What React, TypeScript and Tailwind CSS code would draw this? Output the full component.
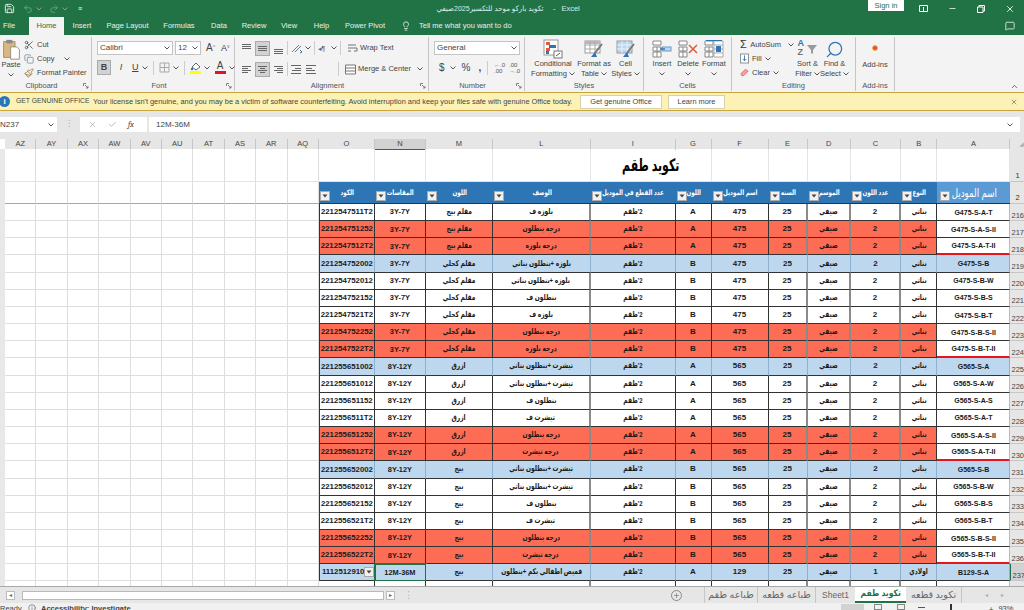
import { Scissors, Copy, Paintbrush, X, Check, Search, Lightbulb, Minus, Plus, Save, Undo2, Redo2, MessageSquare, ChevronUp, Info } from "lucide-react";
import type { ReactNode } from "react";

const SHEET_COLS =
  "grid grid-cols-[5px_repeat(10,31.4px)_56px_51px_67px_98px_84.6px_36px_57px_39px_43.4px_50px_36.6px_73px_13.4px]";

const LEFT_COLS = ["AZ", "AY", "AX", "AW", "AV", "AU", "AT", "AS", "AR", "AQ"];
const TABLE_COLS = ["O", "N", "M", "L", "I", "G", "F", "E", "D", "C", "B", "A"];

const HEADERS = [
  "الكود",
  "المقاسات",
  "اللون",
  "الوصف",
  "عدد القطع في الموديل",
  "اللون",
  "اسم الموديل",
  "السنه",
  "الموسم",
  "عدد اللون",
  "النوع",
];

const V_BORDERS = [
  "border-r border-r-[#333]",
  "border-r border-r-[#333]",
  "border-r border-r-[#333]",
  "border-r-2 border-r-[#8a8a8a]",
  "border-r border-r-[#333]",
  "border-r border-r-[#333]",
  "border-r border-r-[#333]",
  "border-r-2 border-r-[#8a8a8a]",
  "border-r-2 border-r-[#8a8a8a]",
  "border-r-2 border-r-[#8a8a8a]",
  "border-r border-r-[#333]",
  "border-r border-r-[#bbb]",
];

const CELL_SIZES = [
  "text-[7.8px]",
  "text-[7.4px]",
  "text-[8px]",
  "text-[8px]",
  "text-[8px]",
  "text-[8px]",
  "text-[8px]",
  "text-[8px]",
  "text-[8px]",
  "text-[8px]",
  "text-[8px]",
  "text-[7px]",
];

const TABS: [string, string][] = [
  ["Insert", "w-[36px]"],
  ["Page Layout", "w-[55px]"],
  ["Formulas", "w-[48px]"],
  ["Data", "w-[32px]"],
  ["Review", "w-[38px]"],
  ["View", "w-[32px]"],
  ["Help", "w-[33px]"],
  ["Power Pivot", "w-[54px]"],
];

type Kind = "w" | "r" | "b";
type Row = [number, Kind, string, string, string, string, string, string, string, string, string];

const NAVY = "مقلم كحلي";
const BEIGE = "مقلم بيج";
const BLUE = "ازرق";
const PLAIN = "بيج";
const SET = "بلوزه +بنطلون بناتي";
const TSET = "تيشرت +بنطلون بناتي";
const PANTS = "بنطلون ف";
const TOP = "بلوزه ف";
const TEE = "تيشرت ف";
const G_P = "درجه بنطلون";
const G_B = "درجه بلوزه";
const G_T = "درجه تيشرت";

const ROWS: Row[] = [
  [216, "w", "2212547511T2", "3Y-7Y", BEIGE, TOP, "A", "475", "2", "بناتي", "G475-S-A-T"],
  [217, "r", "221254751252", "3Y-7Y", BEIGE, G_P, "A", "475", "2", "بناتي", "G475-S-A-S-II"],
  [218, "r", "2212547512T2", "3Y-7Y", BEIGE, G_B, "A", "475", "2", "بناتي", "G475-S-A-T-II"],
  [219, "b", "221254752002", "3Y-7Y", NAVY, SET, "B", "475", "2", "بناتي", "G475-S-B"],
  [220, "w", "221254752012", "3Y-7Y", NAVY, SET, "B", "475", "2", "بناتي", "G475-S-B-W"],
  [221, "w", "221254752152", "3Y-7Y", NAVY, PANTS, "B", "475", "2", "بناتي", "G475-S-B-S"],
  [222, "w", "2212547521T2", "3Y-7Y", NAVY, TOP, "B", "475", "2", "بناتي", "G475-S-B-T"],
  [223, "r", "221254752252", "3Y-7Y", NAVY, G_P, "B", "475", "2", "بناتي", "G475-S-B-S-II"],
  [224, "r", "2212547522T2", "3Y-7Y", NAVY, G_B, "B", "475", "2", "بناتي", "G475-S-B-T-II"],
  [225, "b", "221255651002", "8Y-12Y", BLUE, TSET, "A", "565", "2", "بناتي", "G565-S-A"],
  [226, "w", "221255651012", "8Y-12Y", BLUE, TSET, "A", "565", "2", "بناتي", "G565-S-A-W"],
  [227, "w", "221255651152", "8Y-12Y", BLUE, PANTS, "A", "565", "2", "بناتي", "G565-S-A-S"],
  [228, "w", "2212556511T2", "8Y-12Y", BLUE, TEE, "A", "565", "2", "بناتي", "G565-S-A-T"],
  [229, "r", "221255651252", "8Y-12Y", BLUE, G_P, "A", "565", "2", "بناتي", "G565-S-A-S-II"],
  [230, "r", "2212556512T2", "8Y-12Y", BLUE, G_T, "A", "565", "2", "بناتي", "G565-S-A-T-II"],
  [231, "b", "221255652002", "8Y-12Y", PLAIN, TSET, "B", "565", "2", "بناتي", "G565-S-B"],
  [232, "w", "221255652012", "8Y-12Y", PLAIN, TSET, "B", "565", "2", "بناتي", "G565-S-B-W"],
  [233, "w", "221255652152", "8Y-12Y", PLAIN, PANTS, "B", "565", "2", "بناتي", "G565-S-B-S"],
  [234, "w", "2212556521T2", "8Y-12Y", PLAIN, TEE, "B", "565", "2", "بناتي", "G565-S-B-T"],
  [235, "r", "221255652252", "8Y-12Y", PLAIN, G_P, "B", "565", "2", "بناتي", "G565-S-B-S-II"],
  [236, "r", "2212556522T2", "8Y-12Y", PLAIN, G_T, "B", "565", "2", "بناتي", "G565-S-B-T-II"],
  [237, "b", "1112512910", "12M-36M", PLAIN, "قميص اطفالي بكم +بنطلون", "A", "129", "1", "اولادي", "B129-S-A"],
];

function Chev({ light }: { light?: boolean }) {
  return (
    <svg width="6" height="4" viewBox="0 0 6 4" className="shrink-0">
      <path d="M0.5 0.5 L3 3 L5.5 0.5" fill="none" stroke={light ? "#999" : "#555"} strokeWidth="1" />
    </svg>
  );
}

function Launcher() {
  return (
    <svg width="6" height="6" viewBox="0 0 6 6" className="shrink-0">
      <path d="M0.5 3 V0.5 H3 M2 2 L5 5 M5 3 V5 H3" fill="none" stroke="#666" strokeWidth="0.8" />
    </svg>
  );
}

function Lines({ rows }: { rows: [number, number, number][] }) {
  return (
    <svg width="11" height="11" viewBox="0 0 11 11" className="shrink-0">
      {rows.map(([x1, x2, y]) => (
        <path key={y} d={`M${x1} ${y + 0.5} H${x2}`} stroke="#666" strokeWidth="1" />
      ))}
    </svg>
  );
}

function Arabic({ children, squeeze = "scale-x-[0.74]" }: { children: string; squeeze?: string }) {
  return (
    <span dir="rtl" className={`inline-block shrink-0 whitespace-nowrap ${squeeze}`}>
      {children}
    </span>
  );
}

function Group({ label, width, launcher, children }: { label: string; width: string; launcher?: boolean; children: ReactNode }) {
  return (
    <div className={`flex h-full shrink-0 flex-col border-r border-r-[#c6c6c6] ${width}`}>
      <div className="flex min-h-0 flex-1">{children}</div>
      <div className="flex h-[12px] items-center justify-center pt-[2px] text-[7.5px] leading-none text-[#555]">
        <span className="flex-1 text-center">{label}</span>
        {launcher && (
          <span className="pr-[2px]">
            <Launcher />
          </span>
        )}
      </div>
    </div>
  );
}

function BigButton({
  icon,
  lines,
  width,
  chevBelow,
  plain,
}: {
  icon: ReactNode;
  lines: string[];
  width: string;
  chevBelow?: boolean;
  plain?: boolean;
}) {
  return (
    <div className={`flex shrink-0 flex-col items-center pt-[2px] text-[7.5px] leading-[10px] text-[#444] ${width}`}>
      <div className="flex h-[21px] items-center justify-center">{icon}</div>
      {lines.map((line, i) => (
        <div key={line} className="flex items-center gap-[2px] whitespace-nowrap">
          {line}
          {i === lines.length - 1 && !chevBelow && !plain && <Chev />}
        </div>
      ))}
      {chevBelow && (
        <div className="flex h-[10px] items-center">
          <Chev />
        </div>
      )}
    </div>
  );
}

function PasteIcon() {
  return (
    <svg width="19" height="21" viewBox="0 0 20 24">
      <rect x="1" y="3" width="13" height="18" fill="#d9b77e" stroke="#a98a55" />
      <rect x="4" y="1" width="7" height="4" fill="#8a8a8a" />
      <path d="M9 9 H16 L19 12 V23 H9 Z" fill="#fff" stroke="#888" />
    </svg>
  );
}

function CondIcon() {
  return (
    <svg width="20" height="20" viewBox="0 0 20 20">
      <rect x="1" y="1" width="14" height="15" fill="#fff" stroke="#999" />
      <rect x="3" y="3" width="4" height="3" fill="#e05a3a" />
      <rect x="6" y="6" width="7" height="3" fill="#2e75b6" />
      <rect x="3" y="9" width="4" height="3" fill="#e05a3a" />
      <rect x="3" y="12" width="3" height="3" fill="#2e75b6" />
      <rect x="11" y="12" width="8" height="7" fill="#fff" stroke="#777" />
      <path d="M13 17 L17 14" stroke="#555" />
    </svg>
  );
}

function TableIcon({ filled }: { filled?: boolean }) {
  return (
    <svg width="20" height="20" viewBox="0 0 20 20">
      <rect x="1" y="2" width="15" height="12" fill={filled ? "#bcd6ee" : "#fff"} stroke="#999" />
      {!filled && <rect x="1" y="2" width="15" height="3" fill="#b8b8b8" />}
      <path d="M1 6 H16 M1 10 H16 M6 2 V14 M11 2 V14" stroke={filled ? "#e8f1fa" : "#aaa"} />
      <path d="M18 5 L11 14" stroke="#777" strokeWidth="2" />
      <path d="M11 13 L7 18 H13 Z" fill="#2e75b6" />
    </svg>
  );
}

function CellsIcon({ kind }: { kind: "insert" | "delete" | "format" }) {
  return (
    <svg width="20" height="18" viewBox="0 0 20 18">
      <path d="M1 1 H9 V5 H1 Z M1 7 H9 V11 H1 Z M1 12 H9 V17 H1 Z M5 7 V17" fill="#fff" stroke="#888" />
      {kind === "insert" && (
        <>
          <rect x="10" y="7" width="9" height="4" fill="#bcd6ee" stroke="#6a9bc9" />
          <path d="M8 9 H13" stroke="#2e75b6" strokeWidth="1.5" />
        </>
      )}
      {kind === "delete" && <path d="M11 5 L19 13 M19 5 L11 13" stroke="#e05a3a" strokeWidth="1.5" />}
      {kind === "format" && (
        <>
          <path d="M10 1 H19 V17 H10 Z M10 5 H19 M10 9 H19 M10 13 H19" fill="#fff" stroke="#aaa" />
          <rect x="12" y="6" width="5" height="6" fill="#2e75b6" />
          <path d="M2 0.5 H18" stroke="#2e75b6" />
        </>
      )}
    </svg>
  );
}

function FilterButton() {
  return (
    <span className="flex h-[10px] w-[10px] shrink-0 items-center justify-center border border-[#aaa] bg-[#f1f1f1]">
      <svg width="6" height="4" viewBox="0 0 6 4">
        <path d="M0.5 0.5 H5.5 L3 3.5 Z" fill="#444" />
      </svg>
    </span>
  );
}

function Blanks({ line }: { line: string }) {
  return (
    <>
      <div className="bg-[#e8e8e8]" />
      {LEFT_COLS.map((c) => (
        <div key={c} className={`border-r border-r-[#dedede] ${line}`} />
      ))}
    </>
  );
}

function DataRow({ row }: { row: Row }) {
  const [num, kind, code, size, color, desc, letter, model, count, gender, name] = row;
  const bg = kind === "r" ? "bg-[#fd6d55]" : kind === "b" ? "bg-[#bdd7ee]" : "bg-white";
  const cells: string[] = [code, size, color, desc, "2'طقم", letter, model, "25", "صيفي", count, gender, name];
  const endsGroup = name.endsWith("T-II");
  const selected = num === 237;

  return (
    <div className={`${SHEET_COLS} h-[17.17px]`}>
      <Blanks line="border-b border-b-[#dedede]" />
      {cells.map((text, i) => {
        const isName = i === 11;
        const cellBg = isName && kind === "r" ? "bg-white" : bg;
        const bottom = isName && endsGroup ? "border-b-2 border-b-[#e8141c]" : "border-b border-b-[#333]";
        const side = kind === "b" ? "border-r border-r-[#8fb0cc]" : V_BORDERS[i];
        const focus = selected && i === 1 ? "outline-2 -outline-offset-1 outline-[#217346]" : "";
        return (
          <div
            key={i}
            className={`flex items-center overflow-hidden whitespace-nowrap font-bold leading-none text-[#1a1a1a] ${CELL_SIZES[i]} ${cellBg} ${bottom} ${side} ${focus} ${
              i === 0 ? "border-l border-l-[#333]" : ""
            } ${selected && i === 0 ? "justify-between pl-[2px]" : "justify-center"}`}
          >
            {/[\u0600-\u06ff]/.test(text) ? <Arabic>{text}</Arabic> : <span>{text}</span>}
            {selected && i === 0 && <FilterButton />}
          </div>
        );
      })}
      <div
        className={`flex items-end overflow-hidden border-b border-b-[#c6c6c6] pb-px text-[7.5px] leading-none text-[#444] ${
          selected ? "border-l border-l-[#217346] bg-[#d2d2d2] pl-px" : "bg-[#e6e6e6] pl-[1px]"
        }`}
      >
        {num}
      </div>
    </div>
  );
}

function Ribbon() {
  return (
    <div className="flex h-[57px] shrink-0 bg-[#f3f3f3] pb-px pt-[2px]">
      <Group label="Clipboard" width="w-[92px]" launcher>
        <div className="flex w-[22px] shrink-0 flex-col items-center pt-[2px] text-[7.5px] leading-[10px] text-[#444]">
          <PasteIcon />
          <span>Paste</span>
          <span className="mt-[3px]">
            <Chev />
          </span>
        </div>
        <div className="flex flex-col gap-[3px] pl-[2px] pt-[2px] text-[7.5px] leading-[11px] text-[#444]">
          <div className="flex items-center gap-[3px]">
            <Scissors size={10} className="text-[#555]" />
            Cut
          </div>
          <div className="flex items-center gap-[3px]">
            <Copy size={10} className="text-[#7a93ad]" />
            Copy <span className="ml-[6px]"><Chev /></span>
          </div>
          <div className="flex items-center gap-[3px] whitespace-nowrap">
            <Paintbrush size={10} className="text-[#9a7b3c]" />
            Format Painter
          </div>
        </div>
      </Group>

      <Group label="Font" width="w-[143px]" launcher>
        <div className="flex flex-col gap-[5px] pl-[5px] pt-[4px] text-[#444]">
          <div className="flex items-center">
            <div className="flex h-[14px] w-[76px] items-center justify-between border border-[#c4c4c4] bg-white px-[2px] text-[8px]">
              Calibri <Chev />
            </div>
            <div className="ml-[2px] flex h-[14px] w-[26px] items-center justify-between border border-[#c4c4c4] bg-white px-[2px] text-[8px]">
              12 <Chev />
            </div>
            <span className="ml-[5px] text-[10px] leading-none">
              A<sup className="text-[5px] text-[#2e75b6]">^</sup>
            </span>
            <span className="ml-[6px] text-[9px] leading-none">
              A<sup className="text-[5px] text-[#2e75b6]">v</sup>
            </span>
          </div>
          <div className="flex items-center text-[9px]">
            <span className="flex h-[15px] w-[14px] items-center justify-center border border-[#aaa] bg-[#d2d2d2] font-bold">B</span>
            <span className="ml-[6px] w-[8px] text-center italic">I</span>
            <span className="ml-[7px] underline">U</span>
            <span className="ml-[3px]"><Chev /></span>
            <span className="mx-[5px] h-[14px] w-px bg-[#ccc]" />
            <svg width="11" height="11" viewBox="0 0 11 11">
              <path d="M1 1 H10 V10 H1 Z M1 5.5 H10 M5.5 1 V10" fill="none" stroke="#aaa" />
            </svg>
            <span className="ml-[3px]"><Chev /></span>
            <span className="mx-[5px] h-[14px] w-px bg-[#ccc]" />
            <span className="flex flex-col items-center">
              <svg width="11" height="9" viewBox="0 0 11 9">
                <path d="M2 5 L6 1 L10 5 L6 8 Z" fill="#fff" stroke="#666" />
                <circle cx="2" cy="7" r="1.2" fill="#2e75b6" />
              </svg>
              <span className="h-[3px] w-[11px] bg-[#ffff00]" />
            </span>
            <span className="ml-[3px]"><Chev /></span>
            <span className="ml-[5px] flex flex-col items-center text-[10px] leading-[10px]">
              A
              <span className="h-[3px] w-[11px] bg-[#e81123]" />
            </span>
            <span className="ml-[3px]"><Chev /></span>
          </div>
        </div>
      </Group>

      <Group label="Alignment" width="w-[194px]" launcher>
        <div className="flex flex-col gap-[5px] pl-[6px] pt-[3px] text-[7.5px] leading-none text-[#444]">
          <div className="flex h-[16px] items-center">
            <Lines rows={[[1, 10, 1], [1, 10, 3], [1, 10, 5]]} />
            <span className="ml-[3px] flex h-[15px] w-[15px] items-center justify-center border border-[#aaa] bg-[#d2d2d2]">
              <Lines rows={[[1, 10, 3], [1, 10, 5], [1, 10, 7]]} />
            </span>
            <span className="ml-[3px]"><Lines rows={[[1, 10, 6], [1, 10, 8], [1, 10, 10]]} /></span>
            <span className="mx-[3px] h-[14px] w-px bg-[#ccc]" />
            <svg width="12" height="11" viewBox="0 0 12 11">
              <path d="M1 9 L8 2 M4 9 L10 3" stroke="#777" />
              <path d="M9 7 L11 9 L9 10" fill="none" stroke="#2e75b6" />
            </svg>
            <span className="ml-[2px]"><Chev /></span>
            <span className="mx-[3px] h-[14px] w-px bg-[#ccc]" />
            <span className="w-[10px] text-[7px] text-[#555]">
              <span className="text-[#2e75b6]">◂</span>¶
            </span>
            <span className="ml-[3px]"><Chev /></span>
            <span className="ml-[3px] mr-[6px] h-[14px] w-px bg-[#ccc]" />
            <svg width="11" height="11" viewBox="0 0 11 11">
              <path d="M1 2 H9 M1 5 H10 V8 H7 M1 8 H4" fill="none" stroke="#777" />
            </svg>
            <span className="ml-[2px] whitespace-nowrap text-[7.5px]">Wrap Text</span>
          </div>
          <div className="flex h-[16px] items-center">
            <Lines rows={[[1, 10, 2], [1, 7, 4], [1, 10, 6], [1, 7, 8]]} />
            <span className="ml-[3px] flex h-[15px] w-[15px] items-center justify-center border border-[#aaa] bg-[#d2d2d2]">
              <Lines rows={[[1, 10, 2], [3, 8, 4], [1, 10, 6], [3, 8, 8]]} />
            </span>
            <span className="ml-[3px]"><Lines rows={[[1, 10, 2], [4, 10, 4], [1, 10, 6], [4, 10, 8]]} /></span>
            <span className="mx-[3px] h-[14px] w-px bg-[#ccc]" />
            <Lines rows={[[0, 10, 1], [4, 10, 4], [1, 10, 6], [0, 10, 9]]} />
            <span className="ml-[4px]"><Lines rows={[[0, 10, 1], [0, 6, 4], [0, 9, 6], [0, 10, 9]]} /></span>
            <span className="ml-[21px] mr-[6px] h-[14px] w-px bg-[#ccc]" />
            <svg width="11" height="11" viewBox="0 0 11 11">
              <path d="M0.5 1 H10.5 V10 H0.5 Z M0.5 4 H10.5 M0.5 7 H10.5" fill="#fff" stroke="#777" />
            </svg>
            <span className="ml-[2px] whitespace-nowrap text-[7.5px]">Merge &amp; Center</span>
            <span className="ml-[6px]"><Chev /></span>
          </div>
        </div>
      </Group>

      <Group label="Number" width="w-[96px]" launcher>
        <div className="flex w-full flex-col gap-[6px] pl-[5px] pr-[4px] pt-[4px] text-[#444]">
          <div className="flex h-[14px] items-center justify-between border border-[#c4c4c4] bg-white px-[2px] text-[8px]">
            General <Chev />
          </div>
          <div className="flex items-center pl-[5px] text-[10px] leading-none">
            $<span className="ml-[5px]"><Chev /></span>
            <span className="ml-[6px]">%</span>
            <span className="ml-[8px] font-bold">,</span>
            <span className="mx-[6px] h-[14px] w-px bg-[#ccc]" />
            <span className="text-[6px] leading-[6px] text-[#555]">
              <span className="text-[#2e75b6]">←</span>.0
              <br />
              .00
            </span>
            <span className="ml-[4px] text-[6px] leading-[6px] text-[#555]">
              .00
              <br />
              <span className="text-[#2e75b6]">→</span>.0
            </span>
          </div>
        </div>
      </Group>

      <Group label="Styles" width="w-[119px]">
        <BigButton icon={<CondIcon />} width="w-[56px]" lines={["Conditional", "Formatting"]} />
        <BigButton icon={<TableIcon />} width="w-[26px]" lines={["Format as", "Table"]} />
        <BigButton icon={<TableIcon filled />} width="w-[37px]" lines={["Cell", "Styles"]} />
      </Group>

      <Group label="Cells" width="w-[88px]">
        <div className="flex pl-[5px]">
          <BigButton icon={<CellsIcon kind="insert" />} width="w-[26px]" lines={["Insert"]} chevBelow />
          <BigButton icon={<CellsIcon kind="delete" />} width="w-[26px]" lines={["Delete"]} chevBelow />
          <BigButton icon={<CellsIcon kind="format" />} width="w-[26px]" lines={["Format"]} chevBelow />
        </div>
      </Group>

      <Group label="Editing" width="w-[124px]">
        <div className="flex w-[62px] shrink-0 flex-col gap-[3px] pl-[8px] pt-[2px] text-[7.5px] leading-[11px] text-[#444]">
          <div className="flex items-center gap-[3px] whitespace-nowrap">
            <span className="w-[9px] text-[11px] leading-none text-[#333]">Σ</span>AutoSum
            <span className="ml-[4px]"><Chev /></span>
          </div>
          <div className="flex items-center gap-[3px]">
            <svg width="9" height="11" viewBox="0 0 10 11">
              <rect x="0.5" y="0.5" width="9" height="10" fill="#fff" stroke="#888" />
              <path d="M5 2 V8 M3 6 L5 8 L7 6" fill="none" stroke="#2e75b6" />
            </svg>
            Fill <Chev />
          </div>
          <div className="flex items-center gap-[3px]">
            <svg width="9" height="9" viewBox="0 0 10 9">
              <path d="M1 6 L6 1 L9 3 L4 8 H2 Z" fill="#f0a3a0" stroke="#d66" />
            </svg>
            Clear <Chev />
          </div>
        </div>
        <div className="flex">
          <BigButton
            width="w-[27px]"
            lines={["Sort &", "Filter"]}
            icon={
              <span className="relative block h-[20px] w-[20px] text-[9px] font-bold leading-[9px] text-[#2e75b6]">
                A
                <br />
                <span className="text-[#777]">Z</span>
                <svg width="12" height="11" viewBox="0 0 12 11" className="absolute right-0 top-[5px]">
                  <path d="M1 1 H11 L7 6 V10 L5 9 V6 Z" fill="#999" />
                </svg>
              </span>
            }
          />
          <BigButton
            width="w-[27px]"
            lines={["Find &", "Select"]}
            icon={<Search size={19} strokeWidth={1.6} className="-scale-x-100 text-[#2e75b6]" />}
          />
        </div>
      </Group>

      <Group label="Add-ins" width="w-[39px]">
        <BigButton
          width="w-full"
          lines={["Add-ins"]}
          plain
          icon={<span className="mb-[4px] h-[6px] w-[6px] rounded-full border border-[#f5b042] bg-[#e8483a]" />}
        />
      </Group>

      <div className="flex flex-1 items-end justify-end pr-[5px]">
        <ChevronUp size={9} className="text-[#444]" />
      </div>
    </div>
  );
}

export default function App() {
  return (
    <div
      className="flex h-[610px] w-[1024px] flex-col overflow-hidden bg-[#e6e6e6] text-[#333]"
      style={{ fontFamily: '"Liberation Sans", "DejaVu Sans", sans-serif' }}
    >
      {/* title bar */}
      <div className="flex h-[17px] shrink-0 items-center bg-[#217346] text-[7.5px] text-white">
        <Save size={11} className="ml-[4px] text-[#e8f1ec]" />
        <Undo2 size={10} className="ml-[8px] text-[#6ea58a]" />
        <span className="ml-[3px]"><Chev light /></span>
        <Redo2 size={10} className="ml-[7px] text-[#6ea58a]" />
        <span className="ml-[3px]"><Chev light /></span>
        <span className="ml-[10px] w-[6px] text-[7px] leading-none">≡</span>
        <span className="ml-[349px] flex items-center whitespace-nowrap text-[#dcebe3]">
          <Arabic squeeze="scale-x-[0.94]">تكويد باركو موحد للتكسير2025صيفي</Arabic>
          <span className="ml-[6px]">-</span>
          <span className="ml-[6px]">Excel</span>
        </span>
        <span className="ml-auto flex h-[11px] w-[36px] -translate-y-[3px] items-center justify-center bg-white text-[7.5px] text-[#217346]">
          Sign in
        </span>
        <svg width="9" height="7" viewBox="0 0 9 7" className="ml-[15px]">
          <path d="M0.5 0.5 H8.5 V6.5 H0.5 Z M4.5 2 V6" fill="none" stroke="#fff" />
        </svg>
        <Minus size={9} className="ml-[20px]" />
        <svg width="8" height="8" viewBox="0 0 8 8" className="ml-[20px]">
          <path d="M0.5 2 H6 V7.5 H0.5 Z M2 2 V0.5 H7.5 V6 H6" fill="none" stroke="#fff" />
        </svg>
        <X size={10} className="ml-[20px] mr-[9px]" />
      </div>

      {/* tabs */}
      <div className="flex h-[18px] shrink-0 items-center bg-[#217346] text-[7.5px] text-[#e8f1ec]">
        <span className="w-[29px] pl-[3px]">File</span>
        <span className="flex h-full w-[35px] items-center justify-center bg-[#f3f3f3] text-[#217346]">Home</span>
        {TABS.map(([label, width]) => (
          <span key={label} className={`whitespace-nowrap text-center ${width}`}>
            {label}
          </span>
        ))}
        <Lightbulb size={10} className="ml-[9px]" />
        <span className="ml-[8px] whitespace-nowrap">Tell me what you want to do</span>
        <MessageSquare size={10} className="ml-auto mr-[9px]" />
      </div>

      <Ribbon />

      {/* licence warning */}
      <div className="flex h-[19px] shrink-0 items-center border-y border-y-[#c9a43f] bg-[#fdf2b5] text-[7.4px] text-[#444]">
        <span className="-ml-[1px] flex h-[11px] w-[11px] shrink-0 items-center justify-center rounded-full bg-[#2e75b6] text-[8px] font-bold leading-none text-white">
          i
        </span>
        <span className="ml-[6px] w-[77px] shrink-0 whitespace-nowrap text-[6.8px]">GET GENUINE OFFICE</span>
        <span className="w-[487px] shrink-0 whitespace-nowrap">
          Your license isn&apos;t genuine, and you may be a victim of software counterfeiting. Avoid interruption and keep your files safe with genuine Office today.
        </span>
        <span className="flex h-[14px] w-[82px] shrink-0 items-center justify-center border border-[#d8d2a8] bg-white">
          Get genuine Office
        </span>
        <span className="ml-[6px] flex h-[14px] w-[57px] shrink-0 items-center justify-center border border-[#d8d2a8] bg-white">
          Learn more
        </span>
        <X size={8} className="ml-auto mr-[6px] text-[#666]" />
      </div>

      {/* formula bar */}
      <div className="flex h-[28px] shrink-0 items-start bg-[#e6e6e6] pt-[6px] text-[8px] text-[#444]">
        <div className="flex h-[15px] w-[57px] items-center justify-between bg-white pr-[3px]">
          N237 <Chev />
        </div>
        <span className="ml-[8px] mt-[2px] leading-[10px] text-[#aaa]">⋮</span>
        <div className="ml-[7px] flex h-[15px] w-[67px] items-center gap-[11px] bg-white pl-[8px]">
          <X size={9} className="text-[#aaa]" />
          <Check size={9} className="text-[#aaa]" />
          <span className="font-serif text-[8px] italic">fx</span>
        </div>
        <div className="ml-[2px] flex h-[15px] flex-1 items-center justify-between bg-white px-[7px]">
          12M-36M <Chev />
        </div>
        <div className="w-[4px]" />
      </div>

      {/* sheet */}
      <div className="flex min-h-0 flex-1 flex-col bg-white">
        <div className={`${SHEET_COLS} h-[10px] shrink-0 bg-[#e6e6e6] text-[7.5px] leading-[10px] text-[#444]`}>
          <div className="bg-white" />
          {[...LEFT_COLS, ...TABLE_COLS].map((c) => (
            <div
              key={c}
              className={`border-r border-r-[#c6c6c6] text-center ${c === "N" ? "border-b border-b-[#217346] bg-[#d2d2d2]" : ""}`}
            >
              {c}
            </div>
          ))}
          <div className="text-right text-[6px] text-[#b0b0b0]">◢</div>
        </div>

        <div className={`${SHEET_COLS} h-[33px] shrink-0`}>
          <Blanks line="border-b border-b-[#e4e4e4]" />
          {TABLE_COLS.map((c) =>
            c === "G" ? null : c === "I" ? (
              <div
                key={c}
                className="col-span-2 flex items-center justify-center border-b border-r border-[#e4e4e4] text-[17px] font-bold leading-none text-black"
              >
                <Arabic squeeze="scale-x-[0.64]">تكويد طقم</Arabic>
              </div>
            ) : (
              <div key={c} className="border-b border-r border-[#e4e4e4]" />
            ),
          )}
          <div className="flex items-end border-b border-[#c6c6c6] bg-[#e6e6e6] pb-[2px] pl-[5px] text-[7.5px] leading-none">1</div>
        </div>

        <div className={`${SHEET_COLS} h-[22px] shrink-0`}>
          <Blanks line="border-b border-b-[#a8a8a8]" />
          {HEADERS.map((h, i) => (
            <div
              key={i}
              className="relative flex items-start justify-center overflow-hidden border-b border-b-[#333] bg-[#2e75b6] pt-[7px] text-[7.5px] font-bold leading-none text-white"
            >
              <Arabic>{h}</Arabic>
              <span className="absolute bottom-[2px] left-[1px]"><FilterButton /></span>
            </div>
          ))}
          <div className="relative flex items-start justify-center overflow-hidden border-b border-b-[#333] bg-[#5b9bd5] pt-[3px] text-[12px] leading-[16px] text-white">
            <Arabic squeeze="scale-x-[0.72]">اسم الموديل</Arabic>
            <span className="absolute bottom-[2px] left-[3px]"><FilterButton /></span>
          </div>
          <div className="flex items-end border-b border-[#c6c6c6] bg-[#e6e6e6] pb-[2px] pl-[5px] text-[7.5px] leading-none">2</div>
        </div>

        {ROWS.map((row) => (
          <DataRow key={row[0]} row={row} />
        ))}

        <div className={`${SHEET_COLS} min-h-0 flex-1`}>
          <Blanks line="" />
          {TABLE_COLS.map((c, i) => (
            <div key={c} className={`bg-white ${V_BORDERS[i]}`} />
          ))}
          <div className="bg-[#e6e6e6]" />
        </div>
      </div>

      {/* sheet tabs and horizontal scrollbar */}
      <div className="flex h-[17px] shrink-0 items-center border-t border-t-[#a8a8a8] bg-[#e6e6e6] text-[9.5px] text-[#666]">
        <span className="ml-[6px] flex h-[9px] w-[9px] shrink-0 items-center justify-center border border-[#bbb] bg-white text-[6px] leading-none">◂</span>
        <div className="ml-[7px] h-[9px] w-[362px] shrink-0 border border-[#b8b8b8] bg-white" />
        <span className="ml-[2px] flex h-[9px] w-[9px] shrink-0 items-center justify-center border border-[#bbb] bg-white text-[6px] leading-none">▸</span>
        <span className="ml-[9px] w-[4px] shrink-0 leading-none text-[#aaa]">⋮</span>
        <span className="ml-[263px] flex h-[11px] w-[11px] shrink-0 items-center justify-center rounded-full border border-[#888]">
          <Plus size={7} className="text-[#666]" />
        </span>
        <div className="ml-[22px] flex h-full shrink-0 items-center">
          <span className="flex h-full w-[53px] items-center justify-center border-l border-l-[#c6c6c6]"><Arabic squeeze="scale-x-100">طباعه طقم</Arabic></span>
          <span className="flex h-full w-[58px] items-center justify-center border-l border-l-[#c6c6c6]"><Arabic squeeze="scale-x-100">طباعه قطعه</Arabic></span>
          <span className="flex h-full w-[40px] items-center justify-center border-l border-l-[#c6c6c6] text-[8.5px]">Sheet1</span>
          <span className="flex h-full w-[51px] items-center justify-center border-b-2 border-b-[#217346] bg-white text-[9px] font-bold text-[#217346]"><Arabic squeeze="scale-x-[0.85]">تكويد طقم</Arabic></span>
          <span className="flex h-full w-[56px] items-center justify-center border-r border-r-[#c6c6c6]"><Arabic squeeze="scale-x-100">تكويد قطعه</Arabic></span>
        </div>
        <span className="ml-[23px] text-[6px] leading-none text-[#aaa]">◂</span>
        <span className="ml-[13px] text-[6px] leading-none text-[#aaa]">▸</span>
      </div>

      {/* status bar, cut off by the window */}
      <div className="flex h-[7px] shrink-0 items-start overflow-hidden bg-[#f1f1f1] pt-[1px] text-[7.5px] leading-[10px] text-[#444]">
        <span className="w-[26px] shrink-0">Ready</span>
        <Info size={8} className="ml-[2px] shrink-0 text-[#666]" />
        <span className="ml-[5px] w-[78px] shrink-0 whitespace-nowrap font-bold">Accessibility: Investigate</span>
        <span className="ml-[722px] h-[7px] w-[23px] shrink-0 bg-[#d2d2d2]" />
        <span className="ml-[10px] h-[6px] w-[8px] shrink-0 border border-[#888]" />
        <span className="ml-[15px] h-[6px] w-[8px] shrink-0 border border-[#888]" />
        <span className="ml-[13px] mt-[3px] h-px w-[7px] shrink-0 bg-[#555]" />
        <span className="ml-[25px] h-[6px] w-[2px] shrink-0 bg-[#333]" />
        <span className="ml-[37px] mt-[1px] shrink-0 whitespace-nowrap">+</span>
        <span className="ml-[5px] shrink-0">93%</span>
      </div>
    </div>
  );
}
